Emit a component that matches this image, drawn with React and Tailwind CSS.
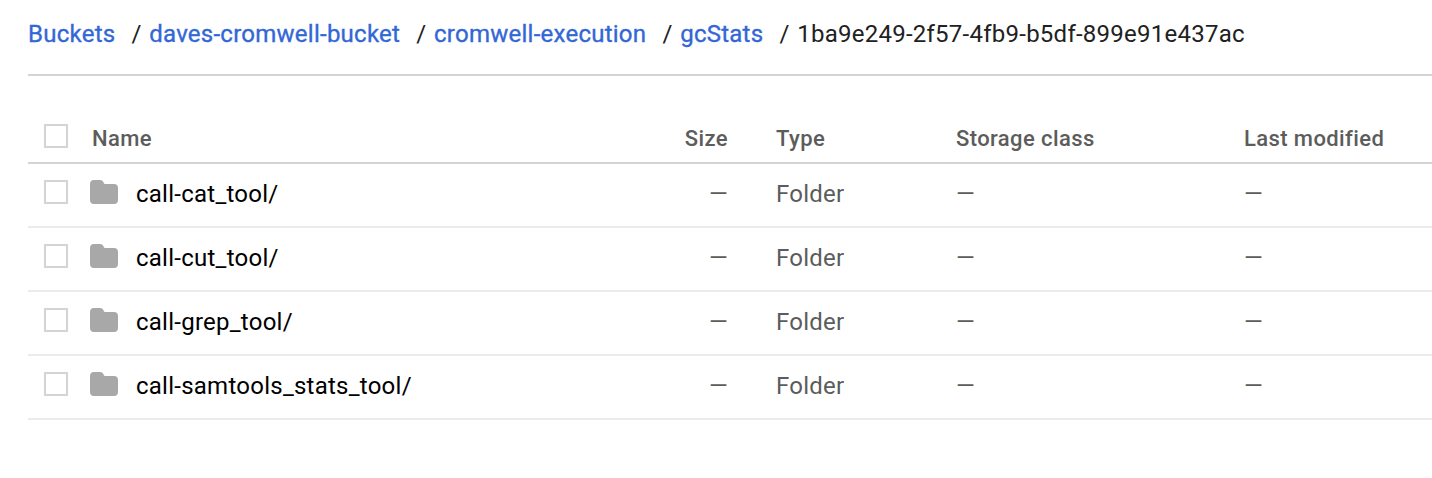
const crumbs = ['Buckets', 'daves-cromwell-bucket', 'cromwell-execution', 'gcStats'];
const rows = ['call-cat_tool/', 'call-cut_tool/', 'call-grep_tool/', 'call-samtools_stats_tool/'];

function Checkbox() {
  return <div className="h-6 w-6 border-2 border-[#d4d4d4] bg-white" />;
}

function Folder() {
  return (
    <svg className="h-6 w-7" viewBox="0 0 28 24" fill="#a8a8a8">
      <path d="M4 0h6c1.8 0 3.2 1 3.6 2.6.2.9.4 1.4 1.4 1.4h9a4 4 0 0 1 4 4v12a4 4 0 0 1-4 4H4a4 4 0 0 1-4-4V4a4 4 0 0 1 4-4z" />
    </svg>
  );
}

export default function App() {
  return (
    <div className="h-[478px] overflow-hidden bg-white pl-7 font-['Roboto',sans-serif]">
      <nav className="flex h-[76px] items-center border-b-2 border-[#d4d4d4] pb-[7px] text-2xl tracking-[0.25px] whitespace-nowrap text-[#212121]">
        {crumbs.map((c) => (
          <span key={c} className="flex">
            <a className="text-[#3367d6] [-webkit-text-stroke:0.35px_#3367d6]">{c}</a>
            <span className="mr-[7.5px] ml-[16.2px]">/</span>
          </span>
        ))}
        <span>1ba9e249-2f57-4fb9-b5df-899e91e437ac</span>
      </nav>
      <div className="grid h-[88px] grid-cols-[64px_636px_48px_180px_288px_188px] border-b-2 border-[#d4d4d4] pt-12 text-[22px] leading-[30px] font-medium tracking-[0.4px] whitespace-nowrap text-[#5c5c5c]">
        <div className="pl-4"><Checkbox /></div>
        <div className="flex justify-between"><span>Name</span><span>Size</span></div>
        <div />
        <div>Type</div>
        <div>Storage class</div>
        <div>Last modified</div>
      </div>
      {rows.map((r) => (
        <div key={r} className="grid h-16 grid-cols-[62px_46px_592px_48px_180px_288px_188px] border-b-2 border-[#ebebeb] pt-4 text-2xl leading-7 tracking-[0.25px] whitespace-nowrap text-[#5c5c5c]">
          <div className="pl-4"><Checkbox /></div>
          <Folder />
          <div className="flex justify-between"><span className="text-black">{r}</span><span>—</span></div>
          <div />
          <div>Folder</div>
          <div>—</div>
          <div>—</div>
        </div>
      ))}
    </div>
  );
}
